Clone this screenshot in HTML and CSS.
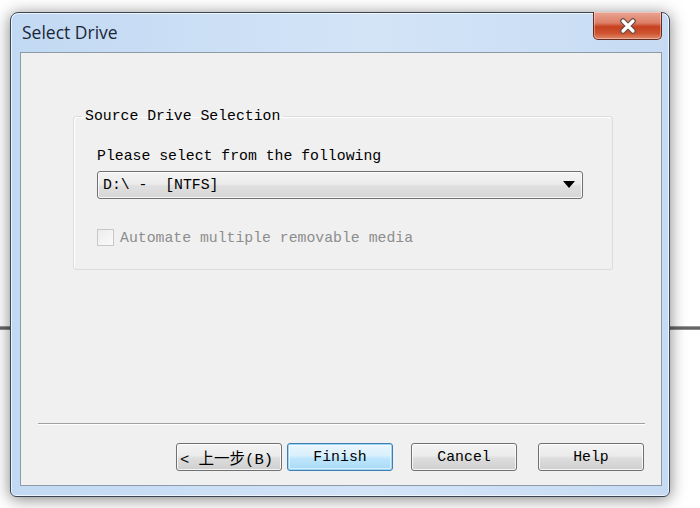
FILE: index.html
```html
<!DOCTYPE html>
<html>
<head>
<meta charset="utf-8">
<link rel="stylesheet" href="styles.css">
</head>
<body>
<div class="desk-line"></div>
<div class="window">
  <div class="titlebar">
    <span class="title">Select Drive</span>
    <div class="close">
      <svg width="22" height="16" viewBox="0 0 22 16">
        <path d="M6 3 L16 13 M16 3 L6 13" stroke="#6a4a40" stroke-width="5.6" stroke-linecap="round" fill="none"/>
        <path d="M6 3 L16 13 M16 3 L6 13" stroke="#ffffff" stroke-width="3.2" stroke-linecap="round" fill="none"/>
      </svg>
    </div>
  </div>
  <div class="client">
    <div class="content">
      <fieldset class="group">
        <legend class="legend">Source Drive Selection</legend>
        <div class="prompt">Please select from the following</div>
        <div class="combo">
          <span class="combo-text">D:\ -&nbsp; [NTFS]</span>
          <svg class="combo-arrow" width="12" height="8" viewBox="0 0 12 8"><path d="M0 0 L12 0 L6 7 Z" fill="#000"/></svg>
        </div>
        <label class="check">
          <span class="box"></span>
          <span class="check-text">Automate multiple removable media</span>
        </label>
      </fieldset>
    </div>
    <div class="spacer"></div>
    <div class="separator"></div>
    <div class="buttons">
      <div class="btn btn-back">&lt; 上一步(B)</div>
      <div class="btn btn-default">Finish</div>
      <div class="btn btn-cancel">Cancel</div>
      <div class="btn btn-help">Help</div>
    </div>
  </div>
</div>
</body>
</html>
```

FILE: styles.css
```css
html, body {
  margin: 0;
  padding: 0;
}
body {
  width: 700px;
  height: 508px;
  overflow: hidden;
  position: relative;
  background: #ffffff;
  font-family: "Liberation Mono", "Noto Sans CJK SC", monospace;
}
.desk-line {
  position: absolute;
  left: 0;
  top: 326px;
  width: 700px;
  height: 4px;
  background: linear-gradient(#b0b0b0, #505050 50%, #a0a0a0);
  z-index: 0;
}
.window {
  position: relative;
  z-index: 1;
  margin: 12px 0 0 10px;
  border: 1px solid #3b4654;
  border-radius: 8px 8px 6px 6px;
  background: linear-gradient(90deg, #c2d9f3 0%, #d3e4f7 55%, #c6dbf3 100%);
  box-shadow: 0 2px 16px rgba(0,0,0,0.5), inset 0 0 0 1px rgba(255,255,255,0.7);
  padding: 0 7px 10px 9px;
  box-sizing: border-box;
  width: 660px;
  height: 485px;
  display: flex;
  flex-direction: column;
}
.titlebar {
  height: 39px;
  display: flex;
  justify-content: space-between;
  align-items: flex-start;
}
.title {
  font-family: "Open Sans", "Noto Sans", sans-serif;
  font-size: 17.5px;
  color: #1b2636;
  margin: 7px 0 0 2px;
  line-height: 24px;
}
.close {
  margin-top: -1px;
  width: 69px;
  height: 28px;
  box-sizing: border-box;
  border: 1px solid #6b2a1e;
  border-top: none;
  border-radius: 0 0 5px 5px;
  background: linear-gradient(#e9a594 0%, #dd7f67 40%, #c5401f 55%, #cf5532 80%, #e08a6a 100%);
  display: flex;
  justify-content: center;
  align-items: center;
  box-shadow: inset 0 0 0 1px rgba(255,255,255,0.35);
}
.client {
  flex: 1;
  background: #f0f0f0;
  border: 1px solid #8d9aa8;
  display: flex;
  flex-direction: column;
}
.content {
  padding: 55px 0 0 52px;
}
.group {
  margin: 0;
  width: 540px;
  height: 162px;
  box-sizing: border-box;
  border: 1px solid #dcdcdc;
  border-radius: 3px;
  padding: 0 0 0 23px;
  box-shadow: inset 1px 1px 0 #ffffff;
}
.legend {
  font-size: 14.8px;
  color: #000;
  padding: 0 3px;
  margin-left: -15px;
  line-height: 17px;
}
.prompt {
  font-size: 14.8px;
  color: #000;
  line-height: 17px;
  margin-top: 23px;
}
.combo {
  margin-top: 6px;
  width: 486px;
  height: 28px;
  box-sizing: border-box;
  border: 1px solid #707070;
  border-radius: 3px;
  background: linear-gradient(#f4f4f4 0%, #ececec 45%, #dfdfdf 55%, #d6d6d6 100%);
  box-shadow: inset 0 0 0 1px rgba(255,255,255,0.8);
  display: flex;
  align-items: center;
  justify-content: space-between;
  padding: 0 7px 0 5px;
}
.combo-text {
  font-size: 14.8px;
  color: #000;
}
.check {
  display: flex;
  align-items: center;
  margin-top: 30px;
}
.box {
  width: 17px;
  height: 17px;
  box-sizing: border-box;
  border: 1px solid #c8c8c8;
  background: linear-gradient(135deg, #ececec, #fafafa);
  margin-right: 6px;
}
.check-text {
  font-size: 14.8px;
  color: #8d8d8d;
}
.spacer {
  flex: 1;
}
.separator {
  margin: 0 16px 0 17px;
  height: 1px;
  background: #a0a0a0;
  border-bottom: 1px solid #ffffff;
}
.buttons {
  display: flex;
  justify-content: flex-end;
  padding: 18px 17px 14px 0;
}
.btn {
  height: 28px;
  box-sizing: border-box;
  border: 1px solid #707070;
  border-radius: 3px;
  background: linear-gradient(#f3f3f3 0%, #ebebeb 45%, #dddddd 55%, #cfcfcf 100%);
  box-shadow: inset 0 0 0 1px rgba(255,255,255,0.8);
  font-size: 14.8px;
  color: #000;
  display: flex;
  align-items: center;
  justify-content: center;
  width: 106px;
}
.btn-back {
  justify-content: flex-start;
  padding-left: 3px;
  margin-right: 5px;
  font-size: 15.5px;
}
.btn-default {
  border-color: #3c7fb1;
  background: linear-gradient(#eaf6fd 0%, #d9f0fc 45%, #bee6fd 55%, #a7d9f5 100%);
  box-shadow: inset 0 0 0 1px #9fd5f4, inset 0 0 0 2px rgba(255,255,255,0.5);
  margin-right: 18px;
}
.btn-cancel {
  margin-right: 21px;
}
```
